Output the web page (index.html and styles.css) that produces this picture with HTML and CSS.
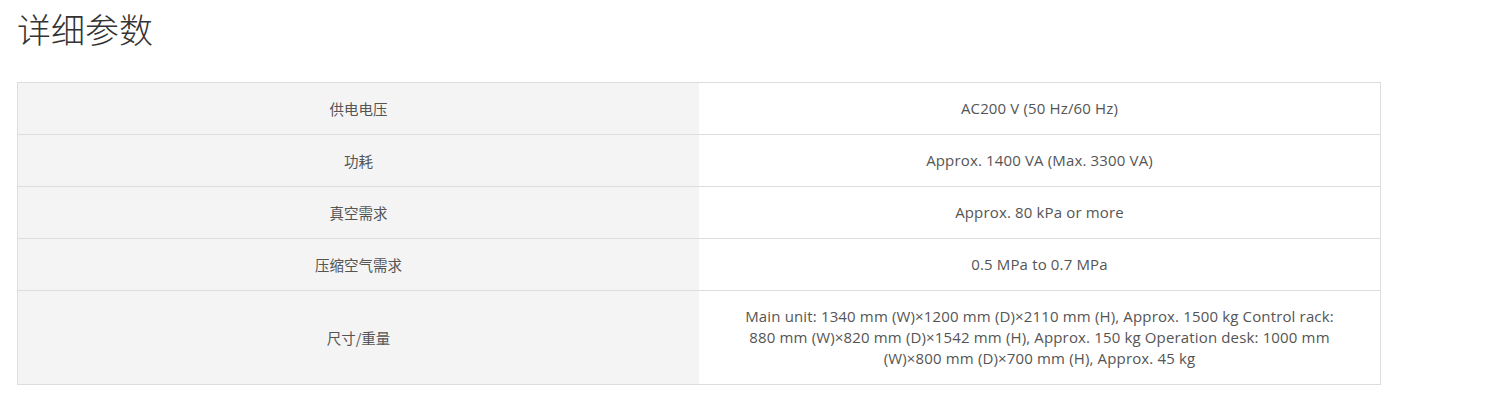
FILE: index.html
```html
<!DOCTYPE html>
<html lang="zh-CN">
<head>
<meta charset="utf-8">
<title>详细参数</title>
<link rel="stylesheet" href="styles.css">
</head>
<body>
<div class="page">
  <h2 class="title">详细参数</h2>
  <table class="spec">
    <tbody>
      <tr><th>供电电压</th><td>AC200 V (50 Hz/60 Hz)</td></tr>
      <tr><th>功耗</th><td>Approx. 1400 VA (Max. 3300 VA)</td></tr>
      <tr><th>真空需求</th><td>Approx. 80 kPa or more</td></tr>
      <tr><th>压缩空气需求</th><td>0.5 MPa to 0.7 MPa</td></tr>
      <tr><th>尺寸/重量</th><td><div class="wrap">Main unit: 1340 mm (W)×1200 mm (D)×2110 mm (H), Approx. 1500 kg Control rack: 880 mm (W)×820 mm (D)×1542 mm (H), Approx. 150 kg Operation desk: 1000 mm (W)×800 mm (D)×700 mm (H), Approx. 45 kg</div></td></tr>
    </tbody>
  </table>
</div>
</body>
</html>
```

FILE: styles.css
```css
html, body {
  margin: 0;
  padding: 0;
  background: #fff;
}
.page {
  padding: 8px 17px 0 17px;
  font-family: "Open Sans", "Noto Sans CJK SC", sans-serif;
  color: #555;
}
.title {
  margin: 0 0 32px 0;
  font-family: "Noto Sans CJK SC", sans-serif;
  font-weight: 300;
  font-size: 34px;
  line-height: 42px;
  color: #333;
}
.spec {
  width: 1364px;
  border-collapse: collapse;
  border: 1px solid #ddd;
  font-size: 15px;
  letter-spacing: 0.15px;
  line-height: 21px;
}
.spec th, .spec td {
  width: 50%;
  padding: 15px 10px;
  text-align: center;
  font-weight: normal;
  border-top: 1px solid #ddd;
  vertical-align: middle;
}
.spec th {
  background: #f4f4f4;
  font-family: "Noto Sans CJK SC", sans-serif;
  font-size: 14.5px;
  letter-spacing: 0;
}
.spec td {
  background: #fff;
}
.wrap {
  max-width: 600px;
  margin: 0 auto;
}
```
